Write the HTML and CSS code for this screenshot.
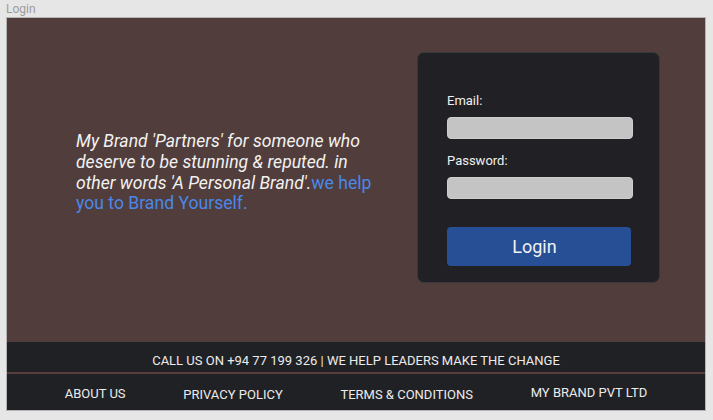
FILE: index.html
```html
<!DOCTYPE html>
<html lang="en">
<head>
<meta charset="utf-8">
<title>Login</title>
<link rel="stylesheet" href="styles.css">
</head>
<body>
  <div class="page-label">Login</div>
  <div class="frame">
    <main class="main">
      <section class="intro">
        <p class="intro-text">My Brand 'Partners' for someone who deserve to be stunning &amp; reputed. in other words 'A Personal Brand'.<span class="intro-link">we help you to Brand Yourself.</span></p>
      </section>
      <form class="card">
        <label class="field-label" for="email">Email:</label>
        <input class="field-input" id="email" type="text">
        <label class="field-label second" for="password">Password:</label>
        <input class="field-input" id="password" type="password">
        <button class="login-btn" type="button">Login</button>
      </form>
    </main>
    <footer class="footer">
      <div class="footer-call">CALL US ON +94 77 199 326 | WE HELP LEADERS MAKE THE CHANGE</div>
      <div class="footer-sep"></div>
      <nav class="footer-links">
        <a class="footer-link">ABOUT US</a>
        <a class="footer-link down">PRIVACY POLICY</a>
        <a class="footer-link down">TERMS &amp; CONDITIONS</a>
        <a class="footer-link up">MY BRAND PVT LTD</a>
      </nav>
    </footer>
  </div>
</body>
</html>
```

FILE: styles.css
```css
* { box-sizing: border-box; }
html, body { margin: 0; padding: 0; }
body {
  background: #e6e6e6;
  font-family: Roboto, "Noto Sans", Arial, sans-serif;
  width: 713px;
  height: 420px;
  overflow: hidden;
}
.page-label {
  height: 17px;
  padding: 2px 0 0 6px;
  font-size: 12px;
  line-height: 15px;
  color: #9c9c9c;
}
.frame {
  margin-left: 6px;
  width: 700px;
  height: 394px;
  border: 1px solid #b4b4b4;
  display: flex;
  flex-direction: column;
}
.main {
  height: 324px;
  background: #513d3b;
  display: flex;
  align-items: flex-start;
  padding-top: 34px;
}
.intro {
  height: 231px;
  display: flex;
  align-items: center;
  padding: 10px 0 0 69px;
}
.intro-text {
  margin: 0;
  width: 305px;
  font-size: 17.6px;
  line-height: 20.7px;
  font-style: italic;
  color: #f2f2f2;
}
.intro-link { color: #4a88ea; font-style: normal; }
.card {
  margin: 0 45px 0 auto;
  width: 243px;
  height: 231px;
  background: #212125;
  border: 1px solid #38383c;
  border-radius: 7px;
  padding: 40px 0 0 29px;
  display: flex;
  flex-direction: column;
  align-items: flex-start;
}
.field-label {
  font-size: 13px;
  line-height: 16px;
  color: #f0f0f0;
  margin-bottom: 8px;
}
.field-label.second { margin-top: 14px; }
.field-input {
  width: 186px;
  height: 22px;
  margin: 0;
  background: #c4c4c4;
  border: 1px solid #cdcdcd;
  border-radius: 4px;
  outline: none;
}
.login-btn {
  margin-top: 28px;
  width: 184px;
  height: 39px;
  background: #274f96;
  border: none;
  border-radius: 4px;
  color: #f2f2f2;
  font-family: Roboto, "Noto Sans", Arial, sans-serif;
  font-size: 18px;
  padding: 0 9px 0 0;
}
.footer {
  flex: 1;
  background: #202125;
  color: #ececec;
  font-size: 13px;
  line-height: 15px;
}
.footer-call {
  height: 30px;
  padding-top: 11px;
  text-align: center;
}
.footer-sep {
  height: 2px;
  background: #5a3e3e;
}
.footer-links {
  height: 36px;
  padding-top: 12px;
  display: flex;
  align-items: flex-start;
  justify-content: space-evenly;
}
.footer-link { color: #ececec; text-decoration: none; }
.footer-link.down { margin-top: 1px; }
.footer-link.up { margin-top: -1px; }
```
